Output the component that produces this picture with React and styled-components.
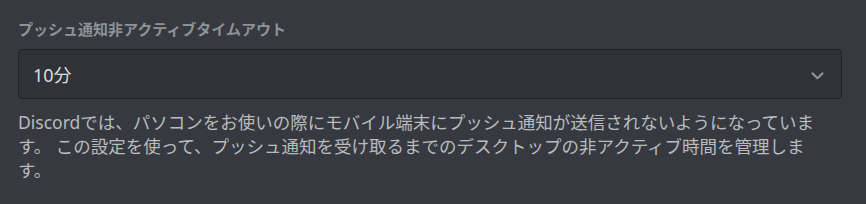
import styled, { createGlobalStyle } from 'styled-components';

const GlobalStyle = createGlobalStyle`
  html, body {
    margin: 0;
    padding: 0;
    background-color: #36393f;
  }
  body {
    font-family: "Noto Sans", "Noto Sans CJK JP", sans-serif;
  }
`;

const Section = styled.div`
  width: 866px;
  height: 204px;
  box-sizing: border-box;
  padding: 19px 24px 0 18px;
  background-color: #36393f;
`;

const Label = styled.h5`
  margin: 0 0 10px;
  font-size: 15px;
  line-height: 20px;
  font-weight: 700;
  color: #8e9297;
`;

const Select = styled.div`
  display: flex;
  align-items: center;
  justify-content: space-between;
  height: 50px;
  box-sizing: border-box;
  padding: 0 15px 0 14px;
  background-color: #2f3237;
  border: 1px solid #202225;
  border-radius: 4px;
  cursor: pointer;
`;

const Value = styled.span`
  font-size: 18px;
  color: #dcddde;
`;

const Chevron = styled.svg`
  width: 17px;
  height: 17px;
  margin-top: 2px;
  color: #8e9297;
`;

const Description = styled.p`
  width: 800px;
  margin: 11px 0 0;
  font-size: 17.5px;
  line-height: 24px;
  color: #b9bbbe;
`;

const App = () => {
  return (
    <>
      <GlobalStyle />
      <Section>
        <Label>プッシュ通知非アクティブタイムアウト</Label>
        <Select>
          <Value>10分</Value>
          <Chevron viewBox="0 0 24 24" fill="none">
            <path
              d="M5 9l7 7 7-7"
              stroke="currentColor"
              strokeWidth="3"
              strokeLinecap="round"
              strokeLinejoin="round"
            />
          </Chevron>
        </Select>
        <Description>
          Discordでは、パソコンをお使いの際にモバイル端末にプッシュ通知が送信されないようになっています。 この設定を使って、プッシュ通知を受け取るまでのデスクトップの非アクティブ時間を管理します。
        </Description>
      </Section>
    </>
  );
};

export default App;
